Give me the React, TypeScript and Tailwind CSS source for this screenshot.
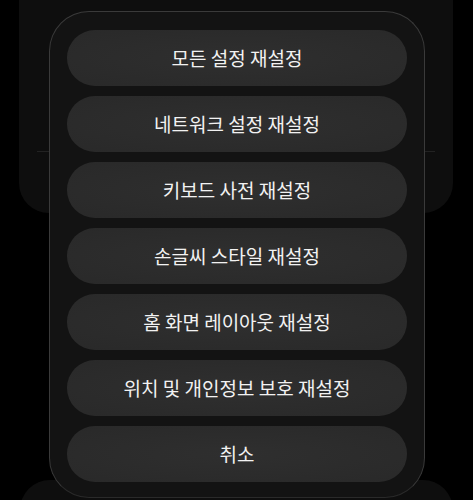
import React from "react";

const options = [
  "모든 설정 재설정",
  "네트워크 설정 재설정",
  "키보드 사전 재설정",
  "손글씨 스타일 재설정",
  "홈 화면 레이아웃 재설정",
  "위치 및 개인정보 보호 재설정",
  "취소",
];

export default function App() {
  return (
    <div
      className="relative w-[473px] h-[500px] overflow-hidden bg-black"
      style={{ fontFamily: '"Noto Sans CJK KR", "Noto Sans", sans-serif' }}
    >
      {/* dimmed settings cards behind the sheet */}
      <div className="absolute left-[19px] right-[20px] top-[-40px] h-[253px] rounded-[30px] bg-[#0e0e0e]">
        <div className="absolute left-[18px] right-[18px] top-[191px] h-px bg-[#222]" />
      </div>
      <div className="absolute left-[20px] right-[20px] top-[480px] h-[80px] rounded-[30px] bg-[#0e0e0e]" />

      {/* action sheet */}
      <div className="absolute left-[49px] top-[11px] w-[376px] h-[487px] rounded-[40px] border border-[#3a3a3a] border-b-[#2a2a2a] bg-[#131313] px-[17px] pt-[18px]">
        <div className="flex flex-col gap-[10px]">
          {options.map((label) => (
            <button
              key={label}
              className="h-[56px] w-full rounded-full bg-[radial-gradient(ellipse_at_center,#2f2f2f_0%,#292929_100%)] text-[19px] text-[#f2f2f2] flex items-center justify-center"
            >
              {label}
            </button>
          ))}
        </div>
      </div>
    </div>
  );
}
